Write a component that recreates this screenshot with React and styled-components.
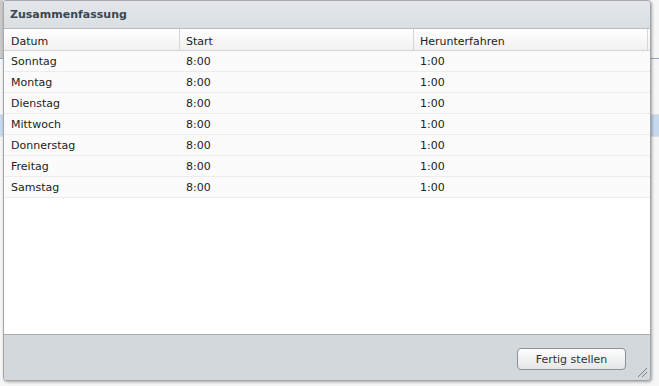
import React from 'react';
import styled, { createGlobalStyle } from 'styled-components';

const GlobalStyle = createGlobalStyle`
    html, body {
        margin: 0;
        padding: 0;
        width: 659px;
        height: 386px;
        overflow: hidden;
        background: #f4f4f4;
        font-family: "DejaVu Sans", Verdana, sans-serif;
    }
`;

const Page = styled.div`
    position: relative;
    width: 659px;
    height: 386px;
    background: linear-gradient(to right, #c9c9c9 0, #c9c9c9 3px, #f6f6f6 3px);
`;

const BackRows = styled.div`
    display: flex;
    flex-direction: column;
    padding-top: 58px;
`;

const BackRow = styled.div`
    height: ${p => p.h}px;
    background: ${p => p.bg};
    border-top: 1px solid ${p => p.line};
`;

const Window = styled.div`
    position: absolute;
    left: 3px;
    top: 0;
    width: 646px;
    height: 379px;
    display: flex;
    flex-direction: column;
    border: 1px solid #a4a7aa;
    border-radius: 3px 4px 4px 4px;
    background: #d3d8dc;
    box-shadow: 1px 1px 3px rgba(0, 0, 0, 0.35);
    overflow: hidden;
`;

const TitleBar = styled.div`
    height: 27px;
    flex: none;
    display: flex;
    align-items: center;
    padding-left: 6px;
    background: linear-gradient(#e3e7ea, #dadfe3);
    font-size: 11px;
    font-weight: bold;
    color: #3b4650;
`;

const Grid = styled.div`
    flex: 1;
    display: flex;
    flex-direction: column;
    background: #fff;
    border-top: 1px solid #b8bcc0;
    border-bottom: 1px solid #a9adb0;
`;

const Row = styled.div`
    display: grid;
    grid-template-columns: 176px 234px 1fr;
    height: ${p => (p.head ? 21 : 20)}px;
    border-bottom: 1px solid ${p => (p.head ? '#d3d3d3' : '#ececec')};
    background: ${p => (p.head ? 'linear-gradient(#ffffff, #f1f1f1)' : '#fbfbfb')};
`;

const Cell = styled.div`
    display: flex;
    align-items: center;
    padding-left: ${p => (p.first ? 7 : 6)}px;
    padding-top: ${p => (p.head ? 3 : 1)}px;
    font-size: 11px;
    color: #222;
    border-right: ${p => (p.head ? '1px solid #d6d6d6' : 'none')};
    margin-right: ${p => (p.head && p.last ? '2px' : '0')};
`;

const Footer = styled.div`
    height: 45px;
    flex: none;
    position: relative;
    display: flex;
    justify-content: flex-end;
    align-items: center;
    padding-right: 24px;
    padding-top: 2px;
    box-sizing: border-box;
    background: #d3d8dc;
`;

const Button = styled.button`
    width: 109px;
    height: 22px;
    border: 1px solid #8d9094;
    border-radius: 4px;
    background: linear-gradient(#fdfdfd, #e4e6e8);
    font-family: "DejaVu Sans", Verdana, sans-serif;
    font-size: 11px;
    color: #333;
    padding: 1px 0 0;
`;

const Grip = styled.svg`
    position: absolute;
    right: 2px;
    bottom: 2px;
`;

const days = ['Sonntag', 'Montag', 'Dienstag', 'Mittwoch', 'Donnerstag', 'Freitag', 'Samstag'];

function App() {
    return (
        <Page>
            <GlobalStyle />
            <BackRows>
                <BackRow h={55} bg="#f6f6f6" line="#8fa6c0" />
                <BackRow h={21} bg="#c7d9ee" line="#e0e0e0" />
                <BackRow h={260} bg="#f6f6f6" line="#e0e0e0" />
            </BackRows>
            <Window>
                <TitleBar>Zusammenfassung</TitleBar>
                <Grid>
                    <Row head>
                        <Cell head first>Datum</Cell>
                        <Cell head>Start</Cell>
                        <Cell head last>Herunterfahren</Cell>
                    </Row>
                    {days.map(d => (
                        <Row key={d}>
                            <Cell first>{d}</Cell>
                            <Cell>8:00</Cell>
                            <Cell>1:00</Cell>
                        </Row>
                    ))}
                </Grid>
                <Footer>
                    <Button>Fertig stellen</Button>
                    <Grip width="11" height="11" viewBox="0 0 11 11">
                        <line x1="1" y1="10" x2="10" y2="1" stroke="#7a7e82" strokeWidth="1" />
                        <line x1="5" y1="10" x2="10" y2="5" stroke="#7a7e82" strokeWidth="1" />
                    </Grip>
                </Footer>
            </Window>
        </Page>
    );
}

export default App;
